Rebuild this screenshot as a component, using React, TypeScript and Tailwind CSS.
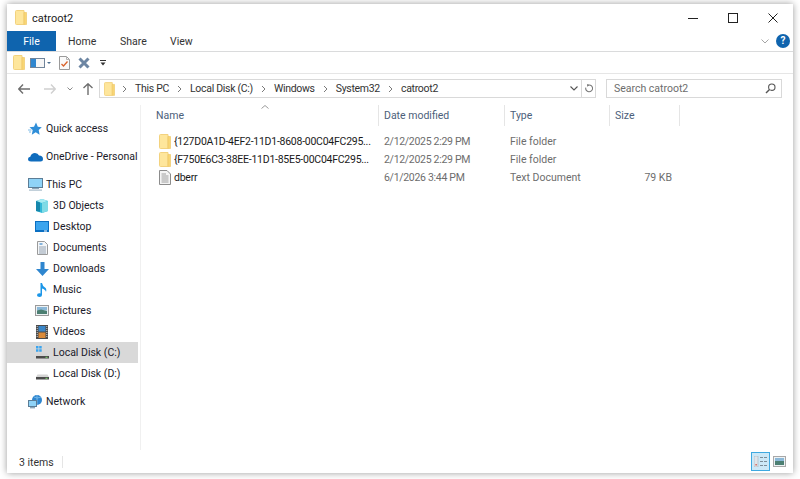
import type { ReactNode } from "react";

const FolderIcon = ({ className = "w-[12px] h-[15px]" }: { className?: string }) => (
  <svg viewBox="0 0 12 15" className={className}>
    <path d="M0.5 1.5 Q0.5 0.5 1.5 0.5 H9 V14.5 H1.5 Q0.5 14.5 0.5 13.5 Z" fill="#fee69c" stroke="#f3d27e" />
    <path d="M9 2.5 H11.5 V14.5 H9 Z" fill="#f8d675" stroke="#ecc25e" strokeWidth="0.6" />
  </svg>
);

const Caret = () => (
  <svg viewBox="0 0 5 8" className="w-[5px] h-[8px] shrink-0">
    <path d="M1 1 L4 4 L1 7" fill="none" stroke="#7a7a7a" strokeWidth="1" />
  </svg>
);

const DocIcon = () => (
  <svg viewBox="0 0 12 15" className="w-[12px] h-[15px]">
    <path d="M0.5 0.5 H8 L11.5 4 V14.5 H0.5 Z" fill="#f4f4f4" stroke="#8c8c8c" />
    <path d="M2.5 4 H7 M2.5 6 H9.5 M2.5 8 H9.5 M2.5 10 H9.5 M2.5 12 H9.5" stroke="#8c8c8c" strokeWidth="0.8" />
  </svg>
);

const StarIcon = () => (
  <svg viewBox="0 0 14 14" className="w-[14px] h-[14px]">
    <path d="M8 0.5 L9.8 4.8 L13.8 5.2 L10.7 8 L11.6 12.8 L7.7 10.3 L3.8 12.8 L4.7 8 L1.5 5.2 L6 4.8 Z" fill="#2f8ed8" />
    <path d="M0 8 H3.5 M1 10 H3" stroke="#7fbce8" strokeWidth="1" />
  </svg>
);

const CloudIcon = () => (
  <svg viewBox="0 0 15 10" className="w-[15px] h-[10px]">
    <path d="M3 9.5 Q0 9.5 0 7 Q0 5 2.3 4.7 Q3.4 1 7 1 Q10 1 11 3.6 Q15 3.8 15 7 Q15 9.5 12.5 9.5 Z" fill="#0f6cbd" />
  </svg>
);

const MonitorIcon = () => (
  <svg viewBox="0 0 15 13" className="w-[15px] h-[13px]">
    <rect x="0.5" y="0.5" width="14" height="9" fill="#8fd3f7" stroke="#5c7d96" />
    <rect x="4" y="10" width="7" height="1" fill="#8aa5b8" />
    <rect x="1" y="11.5" width="13" height="1.2" fill="#a9bccb" />
  </svg>
);

const CubeIcon = () => (
  <svg viewBox="0 0 14 14" className="w-[14px] h-[14px]">
    <path d="M1 2 L7 0 L13 2 L13 12 L7 14 L1 12 Z" fill="#32b8d8" />
    <path d="M1 2 L7 0 L13 2 L7 4 Z" fill="#a8ecf2" />
    <path d="M7 4 L13 2 L13 12 L7 14 Z" fill="#7fdbe6" />
    <path d="M1 2 L5 3.4 L5 12.8 L1 12 Z" fill="#1687ac" />
  </svg>
);

const DesktopIcon = () => (
  <svg viewBox="0 0 14 11" className="w-[14px] h-[11px]">
    <rect x="0" y="0" width="14" height="11" fill="#0a6fc2" />
    <rect x="1" y="1" width="12" height="8" fill="#3aa4ee" />
    <rect x="9" y="9.5" width="3" height="1" fill="#ffffff" />
  </svg>
);

const DocumentsIcon = () => (
  <svg viewBox="0 0 11 14" className="w-[11px] h-[14px]">
    <path d="M0.5 0.5 H7.5 L10.5 3.5 V13.5 H0.5 Z" fill="#f4f6f8" stroke="#9a9a9a" />
    <path d="M2.5 3 H5.5" stroke="#3b87c9" strokeWidth="1.2" />
    <path d="M2 6 H9 M2 8 H9 M2 10 H9 M2 12 H9" stroke="#7c8ea0" strokeWidth="0.8" />
  </svg>
);

const DownloadIcon = () => (
  <svg viewBox="0 0 13 14" className="w-[13px] h-[14px]">
    <path d="M4.5 0 H8.5 V7 H13 L6.5 14 L0 7 H4.5 Z" fill="#2f86cf" />
  </svg>
);

const MusicIcon = () => (
  <svg viewBox="0 0 10 14" className="w-[10px] h-[14px]">
    <path d="M3.5 0 H5 Q5.5 3 8 4.5 Q10 6 9 9 Q8.5 6.5 5 5.5 V11.5 Q5 14 2.5 14 Q0 14 0 12.2 Q0 10.4 2.3 10.2 Q3 10.1 3.5 10.4 Z" fill="#1b96e8" />
  </svg>
);

const PictureIcon = () => (
  <svg viewBox="0 0 14 11" className="w-[14px] h-[11px]">
    <rect x="0.5" y="0.5" width="13" height="10" fill="#eef2f4" stroke="#9a9a9a" />
    <rect x="2" y="2" width="10" height="3.5" fill="#8bb8d8" />
    <path d="M2 5.5 L6 4.5 L12 6 V9 H2 Z" fill="#4c7f72" />
  </svg>
);

const VideoIcon = () => (
  <svg viewBox="0 0 12 14" className="w-[12px] h-[14px]">
    <rect x="0" y="0" width="12" height="14" fill="#4a4a4a" />
    <rect x="2.5" y="1" width="7" height="5.5" fill="#3a86c8" />
    <rect x="2.5" y="7.5" width="7" height="5.5" fill="#d98a3a" />
    <path d="M1.2 1 V13 M10.8 1 V13" stroke="#cfcfcf" strokeWidth="1" strokeDasharray="1 1" />
  </svg>
);

const DriveIcon = ({ windows = false }: { windows?: boolean }) => (
  <svg viewBox="0 0 13 13" className="w-[13px] h-[13px]">
    {windows && <path d="M0 0 H2.5 V2.5 H0 Z M3.2 0 H5.7 V2.5 H3.2 Z M0 3.2 H2.5 V5.7 H0 Z M3.2 3.2 H5.7 V5.7 H3.2 Z" fill="#3aa4ee" />}
    <path d="M1.5 7.5 H11.5 L13 10 H0 Z" fill="#d4d4d4" />
    <rect x="0" y="10" width="13" height="2.5" fill="#4b4b4b" />
    <rect x="9.5" y="10.8" width="2" height="1" fill="#7ddc6f" />
  </svg>
);

const NetworkIcon = () => (
  <svg viewBox="0 0 15 14" className="w-[15px] h-[14px]">
    <circle cx="9" cy="5" r="5" fill="#2f86cf" />
    <path d="M6 2 Q9 4 13 2 M9 0 V10" stroke="#8cc8f0" strokeWidth="0.7" fill="none" />
    <rect x="0.5" y="5.5" width="8" height="6" fill="#8fd3f7" stroke="#5c7d96" />
    <rect x="2" y="12" width="5" height="1.4" fill="#8aa5b8" />
  </svg>
);

const NavRow = ({
  icon,
  label,
  indent = false,
  selected = false,
}: {
  icon: ReactNode;
  label: string;
  indent?: boolean;
  selected?: boolean;
}) => (
  <div className={`h-[21px] w-[131px] flex items-center whitespace-nowrap ${selected ? "bg-[#d9d9d9]" : ""}`}>
    <div className={`flex items-center justify-center w-[16px] shrink-0 ${indent ? "ml-[27px]" : "ml-[20px]"}`}>{icon}</div>
    <span className="ml-[3px] pt-[2px] text-[#1a1a2a]">{label}</span>
  </div>
);

const HeaderCell = ({ label, className }: { label: string; className: string }) => (
  <div className={`h-[21px] flex items-center border-r border-[#e5e5e5] text-[#4c607a] ${className}`}>
    <span className="pt-[2px]">{label}</span>
  </div>
);

const FileRow = ({
  icon,
  name,
  date,
  type,
  size = "",
}: {
  icon: ReactNode;
  name: string;
  date: string;
  type: string;
  size?: string;
}) => (
  <div className="h-[18px] flex items-center whitespace-nowrap">
    <div className="w-[238px] flex items-center pl-[18px] shrink-0">
      <div className="w-[12px] flex justify-center shrink-0">{icon}</div>
      <span className="ml-[3px] pt-[2px] text-[#1a1a1a] tracking-[-0.25px]">{name}</span>
    </div>
    <div className="w-[126px] pl-[5px] pt-[2px] shrink-0 text-[#6d6d6d] tracking-[-0.3px]">{date}</div>
    <div className="w-[105px] pl-[5px] pt-[2px] shrink-0 text-[#6d6d6d]">{type}</div>
    <div className="w-[62px] text-right pt-[2px] shrink-0 text-[#6d6d6d]">{size}</div>
  </div>
);

const crumbs = ["This PC", "Local Disk (C:)", "Windows", "System32", "catroot2"];

export default function App() {
  return (
    <div className="w-[800px] h-[479px] bg-white pl-[7px] pt-[4px] overflow-hidden font-['Roboto',sans-serif] text-[10.5px] leading-none">
      <div className="w-[786px] h-[469px] bg-white flex flex-col shadow-[0_0_7px_rgba(0,0,0,0.4)]">
        {/* title bar */}
        <div className="h-[27px] flex items-center shrink-0">
          <div className="ml-[8px]">
            <FolderIcon />
          </div>
          <span className="ml-[5px] pt-[2px] text-[#1a1a1a] text-[11px]">catroot2</span>
          <div className="ml-auto flex items-center">
            <div className="w-[40px] flex justify-center">
              <svg viewBox="0 0 10 10" className="w-[10px] h-[10px]">
                <path d="M0 5.5 H10" stroke="#222" strokeWidth="1" />
              </svg>
            </div>
            <div className="w-[40px] flex justify-center">
              <svg viewBox="0 0 10 10" className="w-[10px] h-[10px]">
                <rect x="0.5" y="0.5" width="9" height="9" fill="none" stroke="#222" strokeWidth="1" />
              </svg>
            </div>
            <div className="w-[40px] flex justify-center">
              <svg viewBox="0 0 10 10" className="w-[10px] h-[10px]">
                <path d="M0.5 0.5 L9.5 9.5 M9.5 0.5 L0.5 9.5" stroke="#222" strokeWidth="1" />
              </svg>
            </div>
          </div>
        </div>

        {/* ribbon tabs */}
        <div className="h-[21px] flex items-center shrink-0 border-b border-[#dadbdc]">
          <div className="w-[49px] h-[20px] pt-[3px] bg-[#0f64ae] text-white flex items-center justify-center">File</div>
          <div className="ml-[12px] w-[26px] pt-[3px] text-[#333] text-center">Home</div>
          <div className="ml-[26px] w-[25px] pt-[3px] text-[#333] text-center">Share</div>
          <div className="ml-[25px] w-[22px] pt-[3px] text-[#333] text-center">View</div>
          <div className="ml-auto flex items-center mr-[3px]">
            <svg viewBox="0 0 8 5" className="w-[8px] h-[5px]">
              <path d="M0.5 0.5 L4 4 L7.5 0.5" fill="none" stroke="#a5a5a5" />
            </svg>
            <div className="ml-[7px] w-[14px] h-[14px] rounded-full bg-[#0f64ae] text-white font-bold text-[10px] flex items-center justify-center">?</div>
          </div>
        </div>

        {/* quick access toolbar */}
        <div className="h-[22px] flex items-center shrink-0 border-b border-[#e6e6e6] pl-[6px]">
          <FolderIcon />
          <svg viewBox="0 0 21 10" className="ml-[5px] w-[21px] h-[10px]">
            <rect x="0.5" y="0.5" width="14" height="9" fill="#f6f6f6" stroke="#70849a" />
            <rect x="1" y="1" width="5" height="8" fill="#2f86cf" />
            <path d="M17 4 H21 L19 6 Z" fill="#4a6d8e" />
          </svg>
          <svg viewBox="0 0 11 14" className="ml-[8px] w-[11px] h-[14px]">
            <path d="M0.5 0.5 H7.5 L10.5 3.5 V13.5 H0.5 Z" fill="#fafafa" stroke="#9a9a9a" />
            <path d="M7.5 0.5 V3.5 H10.5" fill="none" stroke="#b5b5b5" />
            <path d="M2.5 8 L4.5 10 L8.5 5.5" fill="none" stroke="#d9622b" strokeWidth="1.3" />
          </svg>
          <svg viewBox="0 0 12 12" className="ml-[8px] w-[12px] h-[12px]">
            <path d="M1.5 1.5 L10.5 10.5 M10.5 1.5 L1.5 10.5" stroke="#6d86a3" strokeWidth="3" />
          </svg>
          <svg viewBox="0 0 6 6" className="ml-[10px] w-[6px] h-[6px]">
            <path d="M0 0.5 H6" stroke="#333" />
            <path d="M0.5 2.5 H5.5 L3 5.5 Z" fill="#333" />
          </svg>
        </div>

        {/* address row */}
        <div className="h-[31px] flex items-center shrink-0 pb-[2px]">
          <svg viewBox="0 0 12 10" className="ml-[11px] w-[12px] h-[10px]">
            <path d="M5 0.5 L0.8 5 L5 9.5 M1 5 H12" fill="none" stroke="#6e6e6e" strokeWidth="1.4" />
          </svg>
          <svg viewBox="0 0 12 10" className="ml-[14px] w-[12px] h-[10px]">
            <path d="M7 0.5 L11.2 5 L7 9.5 M0 5 H11" fill="none" stroke="#d0d0d0" strokeWidth="1.4" />
          </svg>
          <svg viewBox="0 0 6 4" className="ml-[11px] w-[6px] h-[4px]">
            <path d="M0.5 0.5 L3 3 L5.5 0.5" fill="none" stroke="#8a8a8a" />
          </svg>
          <svg viewBox="0 0 10 12" className="ml-[10px] w-[10px] h-[12px]">
            <path d="M0.5 5 L5 0.8 L9.5 5 M5 1 V12" fill="none" stroke="#6e6e6e" strokeWidth="1.4" />
          </svg>
          <div className="ml-[6px] w-[497px] h-[19px] border border-[#d9d9d9] flex items-center">
            <div className="ml-[4px]">
              <FolderIcon className="w-[11px] h-[14px]" />
            </div>
            <div className="ml-[7px] flex items-center text-[#333] whitespace-nowrap tracking-[-0.3px]">
              {crumbs.map((c) => (
                <div key={c} className="flex items-center">
                  <Caret />
                  <span className="mx-[8px] pt-[2px]">{c}</span>
                </div>
              ))}
            </div>
            <div className="ml-auto flex items-center h-full">
              <svg viewBox="0 0 8 5" className="w-[8px] h-[5px]">
                <path d="M0.5 0.5 L4 4 L7.5 0.5" fill="none" stroke="#555" strokeWidth="1.1" />
              </svg>
              <div className="ml-[3px] w-[14px] h-full border-l border-[#d9d9d9] flex items-center justify-center">
                <svg viewBox="0 0 10 11" className="w-[9px] h-[10px]">
                  <path d="M4 1 H5.5 A3.8 3.8 0 1 1 2 4" fill="none" stroke="#777" strokeWidth="1.2" />
                  <path d="M3.5 0 L6 1.2 L3.5 3 Z" fill="#777" />
                </svg>
              </div>
            </div>
          </div>
          <div className="ml-[10px] w-[176px] h-[19px] border border-[#d9d9d9] flex items-center pl-[7px] pr-[5px] text-[#6d6d6d]">
            <span className="pt-[2px]">Search catroot2</span>
            <svg viewBox="0 0 11 11" className="ml-auto w-[11px] h-[11px]">
              <circle cx="6.8" cy="4.2" r="3.2" fill="none" stroke="#555" strokeWidth="1.1" />
              <path d="M4.5 6.5 L1 10" stroke="#555" strokeWidth="1.5" />
            </svg>
          </div>
        </div>

        {/* main */}
        <div className="flex-1 flex min-h-0">
          <div className="w-[134px] shrink-0 border-r border-[#f0f0f0] pt-[13px]">
            <NavRow icon={<StarIcon />} label="Quick access" />
            <div className="h-[7px]" />
            <NavRow icon={<CloudIcon />} label="OneDrive - Personal" />
            <div className="h-[7px]" />
            <NavRow icon={<MonitorIcon />} label="This PC" />
            <NavRow indent icon={<CubeIcon />} label="3D Objects" />
            <NavRow indent icon={<DesktopIcon />} label="Desktop" />
            <NavRow indent icon={<DocumentsIcon />} label="Documents" />
            <NavRow indent icon={<DownloadIcon />} label="Downloads" />
            <NavRow indent icon={<MusicIcon />} label="Music" />
            <NavRow indent icon={<PictureIcon />} label="Pictures" />
            <NavRow indent icon={<VideoIcon />} label="Videos" />
            <NavRow indent selected icon={<DriveIcon windows />} label="Local Disk (C:)" />
            <NavRow indent icon={<DriveIcon />} label="Local Disk (D:)" />
            <div className="h-[7px]" />
            <NavRow icon={<NetworkIcon />} label="Network" />
          </div>
          <div className="flex-1 relative">
            <svg viewBox="0 0 8 4" className="absolute left-[120px] top-[0px] w-[8px] h-[4px]">
              <path d="M0.5 3.5 L4 0.5 L7.5 3.5" fill="none" stroke="#9a9a9a" />
            </svg>
            <div className="flex">
              <HeaderCell label="Name" className="w-[238px] pl-[15px]" />
              <HeaderCell label="Date modified" className="w-[126px] pl-[5px]" />
              <HeaderCell label="Type" className="w-[105px] pl-[5px]" />
              <HeaderCell label="Size" className="w-[70px] pl-[5px]" />
            </div>
            <div className="pt-[6px]">
              <FileRow
                icon={<FolderIcon />}
                name="{127D0A1D-4EF2-11D1-8608-00C04FC295..."
                date="2/12/2025 2:29 PM"
                type="File folder"
              />
              <FileRow
                icon={<FolderIcon />}
                name="{F750E6C3-38EE-11D1-85E5-00C04FC295..."
                date="2/12/2025 2:29 PM"
                type="File folder"
              />
              <FileRow icon={<DocIcon />} name="dberr" date="6/1/2026 3:44 PM" type="Text Document" size="79 KB" />
            </div>
          </div>
        </div>

        {/* status bar */}
        <div className="h-[23px] flex items-center shrink-0 text-[#333]">
          <div className="ml-[12px] w-[44px] border-r border-[#e5e5e5] h-[12px] pt-[3px] flex items-center">3 items</div>
          <div className="ml-auto mr-[7px] flex items-center">
            <div className="w-[19px] h-[19px] bg-[#cce8f7] border border-[#3fa9e0] flex items-center justify-center">
              <svg viewBox="0 0 13 11" className="w-[13px] h-[11px]">
                <rect x="0" y="0" width="4" height="11" fill="#dfe5ea" stroke="#9aa5ad" strokeWidth="0.5" />
                <rect x="1.5" y="8" width="1.2" height="1.5" fill="#d04a3a" />
                <path d="M6 1.5 H13 M6 5.5 H13 M6 9.5 H13" stroke="#7c8c98" strokeWidth="1" strokeDasharray="3 1" />
              </svg>
            </div>
            <div className="ml-[3px] w-[13px] h-[11px] flex items-center justify-center">
              <svg viewBox="0 0 13 11" className="w-[13px] h-[11px]">
                <rect x="0.5" y="0.5" width="12" height="10" fill="#eef2f4" stroke="#a8a8a8" />
                <rect x="2" y="2" width="9" height="3" fill="#8bb8d8" />
                <path d="M2 5 H11 V9 H2 Z" fill="#4c7f72" />
              </svg>
            </div>
          </div>
        </div>
      </div>
    </div>
  );
}
